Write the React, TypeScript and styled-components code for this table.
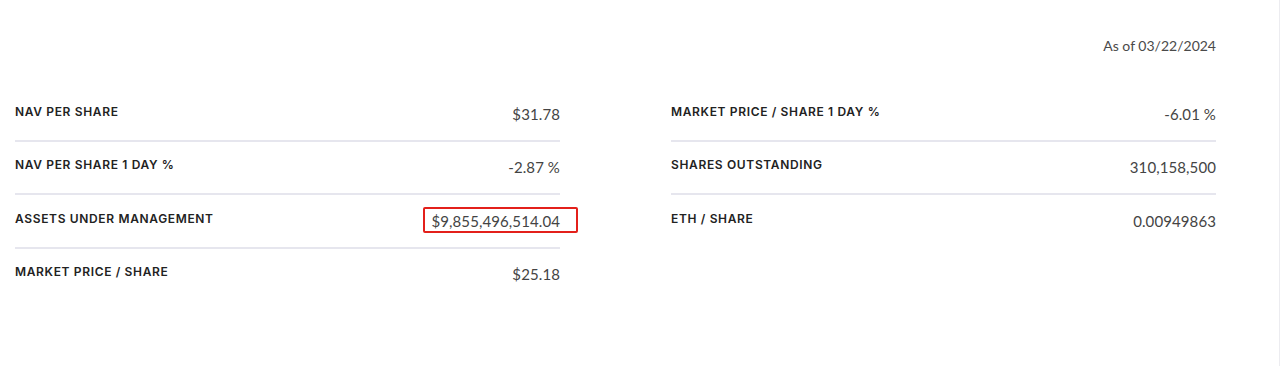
import styled, { createGlobalStyle } from "styled-components";

type StatType = {
  label: string;
  value: string;
  highlight?: boolean;
};

const leftStats: StatType[] = [
  { label: "NAV per share", value: "$31.78" },
  { label: "NAV per share 1 day %", value: "-2.87 %" },
  { label: "Assets under management", value: "$9,855,496,514.04", highlight: true },
  { label: "Market price / share", value: "$25.18" },
];

const rightStats: StatType[] = [
  { label: "Market price / share 1 day %", value: "-6.01 %" },
  { label: "Shares outstanding", value: "310,158,500" },
  { label: "ETH / share", value: "0.00949863" },
];

const GlobalStyle = createGlobalStyle`
  body {
    margin: 0;
    background: #fff;
    font-family: Lato, "Liberation Sans", sans-serif;
  }
`;

const Page = styled.div`
  box-sizing: border-box;
  height: 366px;
  border-right: 1px solid #ececf0;
  padding: 36px 0 0 15px;
`;

const Wrapper = styled.div`
  width: 1201px;
`;

const AsOf = styled.div`
  text-align: right;
  font-size: 14px;
  line-height: 20px;
  color: #4a4a4a;
  margin-bottom: 32px;
`;

const Columns = styled.div`
  display: grid;
  grid-template-columns: 545px 545px;
  column-gap: 111px;
  align-items: start;
`;

const List = styled.ul`
  list-style: none;
  margin: 0;
  padding: 0;
`;

const Row = styled.li<{ last: boolean }>`
  display: flex;
  justify-content: space-between;
  align-items: flex-start;
  padding: 15.5px 0 16px;
  border-bottom: 2px solid ${({ last }) => (last ? "transparent" : "#e6e6ee")};
`;

const Label = styled.span`
  font-family: Inter, "Liberation Sans", sans-serif;
  font-size: 12px;
  line-height: 16px;
  font-weight: 600;
  letter-spacing: 0.65px;
  text-transform: uppercase;
  color: #222;
`;

const Value = styled.span<{ highlight?: boolean }>`
  position: relative;
  font-size: 15px;
  line-height: 20px;
  color: #444;
  letter-spacing: 0.1px;

  ${({ highlight }) =>
    highlight &&
    `
    &::after {
      content: "";
      position: absolute;
      top: -3.5px;
      bottom: -2.5px;
      left: -8px;
      right: -18px;
      border: 2px solid #e3201b;
      border-radius: 2px;
    }
  `}
`;

const StatList = ({ stats }: { stats: StatType[] }) => (
  <List>
    {stats.map((stat, idx) => (
      <Row key={stat.label} last={idx === stats.length - 1}>
        <Label>{stat.label}</Label>
        <Value highlight={stat.highlight}>{stat.value}</Value>
      </Row>
    ))}
  </List>
);

const App = () => {
  return (
    <>
      <GlobalStyle />
      <Page>
        <Wrapper>
          <AsOf>As of 03/22/2024</AsOf>
          <Columns>
            <StatList stats={leftStats} />
            <StatList stats={rightStats} />
          </Columns>
        </Wrapper>
      </Page>
    </>
  );
};

export default App;
